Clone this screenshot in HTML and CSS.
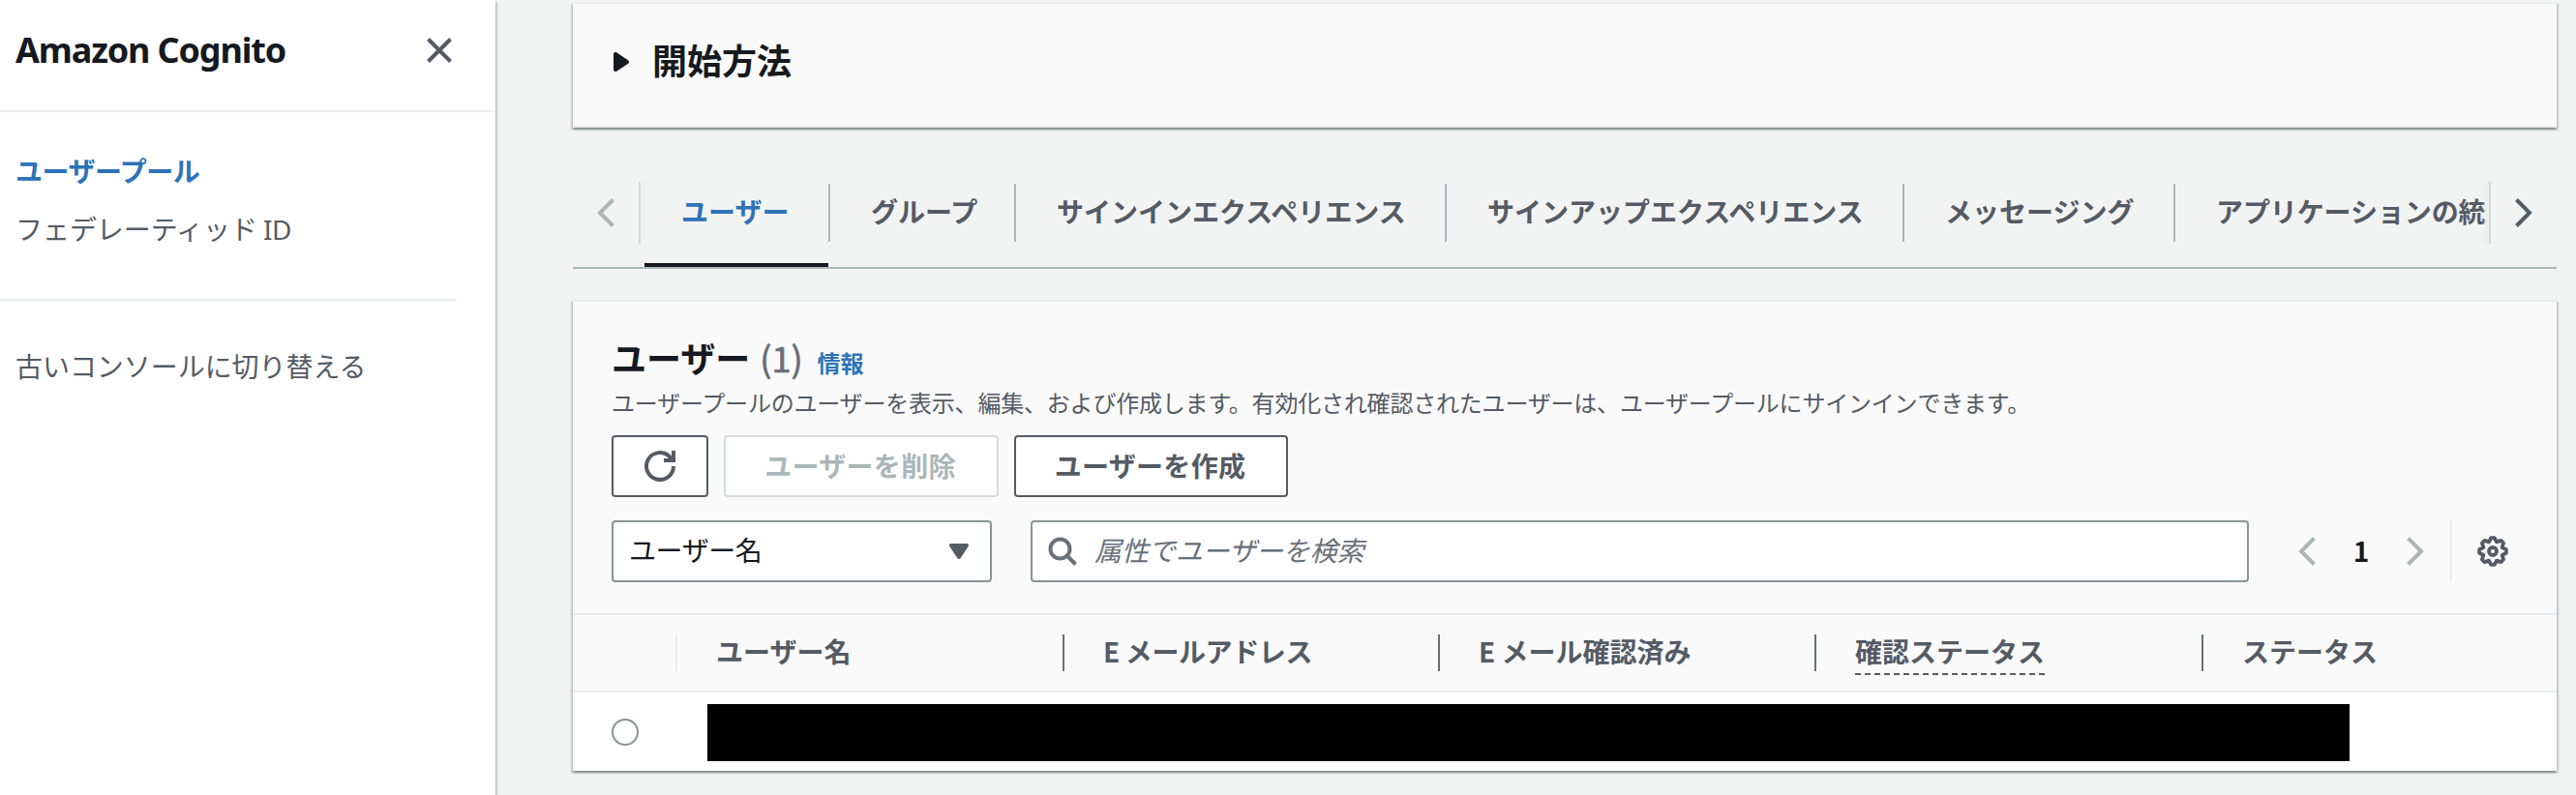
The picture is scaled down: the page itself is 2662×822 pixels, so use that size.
FILE: index.html
```html
<!DOCTYPE html>
<html lang="ja">
<head>
<meta charset="utf-8">
<title>Amazon Cognito</title>
<link rel="stylesheet" href="styles.css">
</head>
<body>
<div class="app">
  <aside class="sidebar">
    <div class="sidebar-header">
      <h2 class="service-name">Amazon Cognito</h2>
      <svg class="close" viewBox="0 0 32 32"><path d="M4.500 4.500 27.500 27.500M27.500 4.500 4.500 27.500"/></svg>
    </div>
    <nav class="nav">
      <a class="nav-link active">ユーザープール</a>
      <a class="nav-link">フェデレーティッド <span class="latin">ID</span></a>
      <hr class="nav-divider">
      <a class="nav-link">古いコンソールに切り替える</a>
    </nav>
  </aside>
  <main class="main">
    <section class="panel getting-started">
      <svg class="caret-right" viewBox="0 0 16 20"><path d="M2 2V18L14 10Z"/></svg>
      <h2 class="heading">開始方法</h2>
    </section>

    <div class="tabs">
      <div class="scroll-button scroll-left"><svg class="chevron muted" viewBox="0 0 20 32"><path d="M17.500 2.500 4 16 17.500 29.500"/></svg></div>
      <div class="tab-list">
        <div class="tab selected">ユーザー</div>
        <div class="tab">グループ</div>
        <div class="tab tab-signin">サインインエクスペリエンス</div>
        <div class="tab tab-signup">サインアップエクスペリエンス</div>
        <div class="tab tab-messaging">メッセージング</div>
        <div class="tab tab-app">アプリケーションの統</div>
      </div>
      <div class="scroll-button scroll-right"><svg class="chevron" viewBox="0 0 20 32"><path d="M2.500 2.500 16 16 2.500 29.500"/></svg></div>
    </div>

    <section class="panel users">
      <div class="users-header">
        <div class="title-row">
          <h2 class="heading">ユーザー</h2><span class="count">(1)</span><a class="info">情報</a>
        </div>
        <p class="description">ユーザープールのユーザーを表示、編集、および作成します。有効化され確認されたユーザーは、ユーザープールにサインインできます。</p>
        <div class="actions">
          <button class="button refresh"><svg class="icon" viewBox="0 0 32 32"><path d="M30 16A14 14 0 1 1 25.900 6.100L29 9.500"/><path class="solid" d="M28 0H32V12H20V8H24L28 6Z"/></svg></button>
          <button class="button disabled">ユーザーを削除</button>
          <button class="button create">ユーザーを作成</button>
        </div>
        <div class="filters">
          <div class="select"><span>ユーザー名</span><svg class="caret-down" viewBox="0 0 20 16"><path d="M2 2H18L10 14Z"/></svg></div>
          <div class="search"><svg class="icon search-icon" viewBox="0 0 32 32"><circle cx="13.500" cy="13.500" r="10"/><path d="M20.500 20.500 29.500 29.500"/></svg><span class="placeholder">属性でユーザーを検索</span></div>
          <div class="pagination">
            <svg class="chevron muted" viewBox="0 0 20 32"><path d="M17.500 2.500 4 16 17.500 29.500"/></svg>
            <span class="page">1</span>
            <svg class="chevron muted" viewBox="0 0 20 32"><path d="M2.500 2.500 16 16 2.500 29.500"/></svg>
          </div>
          <div class="preferences">
            <svg class="gear" viewBox="0 0 32 32"><path d="M14.200 2.100 17.800 2.100 20 6.400 24.500 4.900 27.100 7.500 25.600 12 29.900 14.200 29.900 17.800 25.600 20 27.100 24.500 24.500 27.100 20 25.600 17.800 29.900 14.200 29.900 12 25.600 7.500 27.100 4.900 24.500 6.400 20 2.100 17.800 2.100 14.200 6.400 12 4.900 7.500 7.500 4.900 12 6.400Z"/><circle cx="16" cy="16" r="4"/></svg>
          </div>
        </div>
      </div>
      <div class="table">
        <div class="row head">
          <div class="cell select-cell"></div>
          <div class="cell">ユーザー名</div>
          <div class="cell email">E メールアドレス</div>
          <div class="cell">E メール確認済み</div>
          <div class="cell"><span class="hint">確認ステータス</span></div>
          <div class="cell last">ステータス</div>
        </div>
        <div class="row body-row">
          <span class="radio"></span>
          <span class="redacted"></span>
        </div>
      </div>
    </section>
  </main>
</div>
</body>
</html>
```

FILE: styles.css
```css
* { box-sizing: border-box; }

body {
  margin: 0;
  background: #f2f3f3;
  color: #16191f;
  font-family: "Noto Sans CJK JP", sans-serif;
  font-size: 28px;
  line-height: 44px;
  overflow: hidden;
}

h2, p { margin: 0; }
svg { display: block; fill: none; flex: none; }

.app { display: flex; height: 822px; }

/* Side navigation */
.sidebar {
  width: 512px;
  flex: none;
  background: #fff;
  box-shadow: 2px 2px 2px rgba(0, 28, 36, .15), 0 2px 2px rgba(0, 28, 36, .3);
}
.sidebar-header {
  display: flex;
  justify-content: space-between;
  height: 116px;
  padding: 30px 42px 0 16px;
  border-bottom: 2px solid #eaeded;
}
.service-name {
  font: bold 36px/44px "Noto Sans", sans-serif;
  letter-spacing: -1.15px;
}
.close { width: 32px; height: 32px; margin-top: 6px; stroke: #545b64; stroke-width: 4; }
.nav { display: flex; flex-direction: column; padding: 38px 40px 0 0; }
.nav-link { padding-left: 16px; margin-bottom: 16px; color: #545b64; letter-spacing: -.05px; }
.nav-link.active { color: #2e73b8; font-weight: bold; letter-spacing: -.5px; }
.latin { font-family: "Noto Sans", sans-serif; letter-spacing: -.5px; }
.nav-divider { width: 100%; height: 2px; margin: 34px 0 45px; border: 0; background: #eaeded; }

/* Content */
.main { flex: 1; min-width: 0; padding: 2px 20px 0 80px; }
.panel {
  background: #fafafa;
  border-top: 2px solid #eaeded;
  box-shadow: 0 2px 2px rgba(0, 28, 36, .3), 2px 2px 2px rgba(0, 28, 36, .15), -2px 2px 2px rgba(0, 28, 36, .15);
}
.heading { font-size: 36px; line-height: 44px; font-weight: bold; }
.getting-started {
  display: flex;
  gap: 24px;
  height: 130px;
  padding: 35px 42px;
  border-bottom: 2px solid #eaeded;
}
.caret-right { width: 16px; height: 20px; margin-top: 15px; fill: #16191f; stroke: #16191f; stroke-width: 4; stroke-linejoin: round; }

/* Tabs */
.tabs { display: flex; height: 90px; margin-top: 56px; border-bottom: 2px solid #aab7b8; }
.scroll-button { display: flex; align-items: center; height: 64px; flex: none; }
.scroll-left { width: 70px; padding-left: 24px; border-right: 2px solid #d5dbdb; }
.scroll-right { width: 70px; padding-left: 24px; border-left: 2px solid #d5dbdb; }
.chevron { width: 20px; height: 32px; stroke: #545b64; stroke-width: 4; }
.chevron.muted { stroke: #aab7b8; }
.tab-list { display: flex; flex: 1; min-width: 0; overflow: hidden; padding-left: 4px; }
.tab {
  position: relative;
  flex: none;
  width: 192px;
  height: 88px;
  padding: 8px 0 0 38px;
  color: #545b64;
  font-weight: bold;
  white-space: nowrap;
}
.tab + .tab { padding-left: 42px; }
.tab:not(.tab-app)::after {
  content: "";
  position: absolute;
  top: 2px;
  right: 0;
  width: 2px;
  height: 60px;
  background: #aab7b8;
}
.tab.selected { color: #2e73b8; }
.tab.selected::before {
  content: "";
  position: absolute;
  left: 0;
  right: 2px;
  bottom: 0;
  height: 4px;
  background: #16191f;
}
.tab-signin { width: 445px; }
.tab-signup { width: 473px; }
.tab-messaging { width: 280px; }
.tab-app { width: 324px; letter-spacing: -.1px; }
.tab-app::after {
  content: "";
  position: absolute;
  top: 0;
  right: 0;
  width: 8px;
  height: 64px;
  background: linear-gradient(to right, rgba(242, 243, 243, 0), rgba(232, 234, 234, .7));
}

/* Users */
.users { height: 487px; margin-top: 32px; }
.users-header { height: 322px; padding: 35px 40px 0; }
.title-row { display: flex; align-items: baseline; height: 44px; }
.count { margin-left: 10px; font-size: 36px; color: #687078; -webkit-text-stroke: .7px #687078; }
.info { margin-left: 15px; font-size: 24px; font-weight: bold; color: #2e73b8; }
.description { margin-top: 7px; font-size: 24px; line-height: 36px; letter-spacing: -.2px; color: #545b64; white-space: nowrap; }
.actions { display: flex; gap: 16px; margin-top: 16px; }
.button {
  height: 64px;
  width: 284px;
  padding: 0 2px 2px 0;
  border: 2px solid #545b64;
  border-radius: 4px;
  background: #fff;
  color: #545b64;
  font: inherit;
  font-weight: bold;
  letter-spacing: .3px;
  line-height: 54px;
}
.button.refresh { width: 100px; padding: 0; display: flex; align-items: center; justify-content: center; }
.button.disabled { border-color: #d5dbdb; color: #aab7b8; }
.button.create { width: 283px; }
.icon { width: 32px; height: 32px; stroke: currentColor; stroke-width: 4; }
.solid { fill: currentColor; stroke: none; }
.filters { display: flex; align-items: center; margin-top: 24px; }
.select {
  display: flex;
  align-items: center;
  justify-content: space-between;
  width: 393px;
  height: 64px;
  padding: 0 22px 0 16px;
  border: 2px solid #879596;
  border-radius: 4px;
  background: #fff;
  letter-spacing: -.4px;
}
.select span, .placeholder { position: relative; top: -2px; }
.caret-down { width: 20px; height: 16px; fill: #545b64; stroke: #545b64; stroke-width: 4; stroke-linejoin: round; }
.search {
  display: flex;
  align-items: center;
  gap: 17px;
  width: 1259px;
  height: 64px;
  margin-left: 40px;
  padding-left: 15px;
  border: 2px solid #879596;
  border-radius: 4px;
  background: #fff;
  color: #687078;
}
.placeholder { font-style: italic; letter-spacing: -.1px; }
.pagination { display: flex; align-items: center; justify-content: space-between; width: 132px; margin-left: 50px; }
.page { height: 46px; font-weight: bold; font-size: 28px; }
.preferences { display: flex; align-items: center; height: 64px; margin-left: 26px; padding-left: 26px; border-left: 2px solid #eaeded; }
.gear { width: 32px; height: 32px; stroke: #545b64; stroke-width: 3.8; stroke-linejoin: round; }

/* Table */
.row { display: grid; }
.head {
  grid-template-columns: 108px 400px 388px 389px 400px 1fr;
  align-items: center;
  height: 82px;
  border: solid #eaeded;
  border-width: 2px 0;
  color: #545b64;
  font-weight: bold;
}
.cell { position: relative; height: 38px; padding-left: 40px; line-height: 34px; border-right: 2px solid #687078; }
.select-cell { border-color: #eaeded; }
.cell.email { letter-spacing: -.4px; }
.cell.last { border: 0; }
.hint { display: inline-block; height: 42px; border-bottom: 2px dashed #545b64; }
.body-row { grid-template-columns: 99px 1697px; height: 81px; padding: 12px 0 0 40px; background: #fff; }
.radio { width: 28px; height: 28px; margin-top: 15px; border: 2px solid #879596; border-radius: 50%; }
.redacted { height: 59px; background: #000; }
```
